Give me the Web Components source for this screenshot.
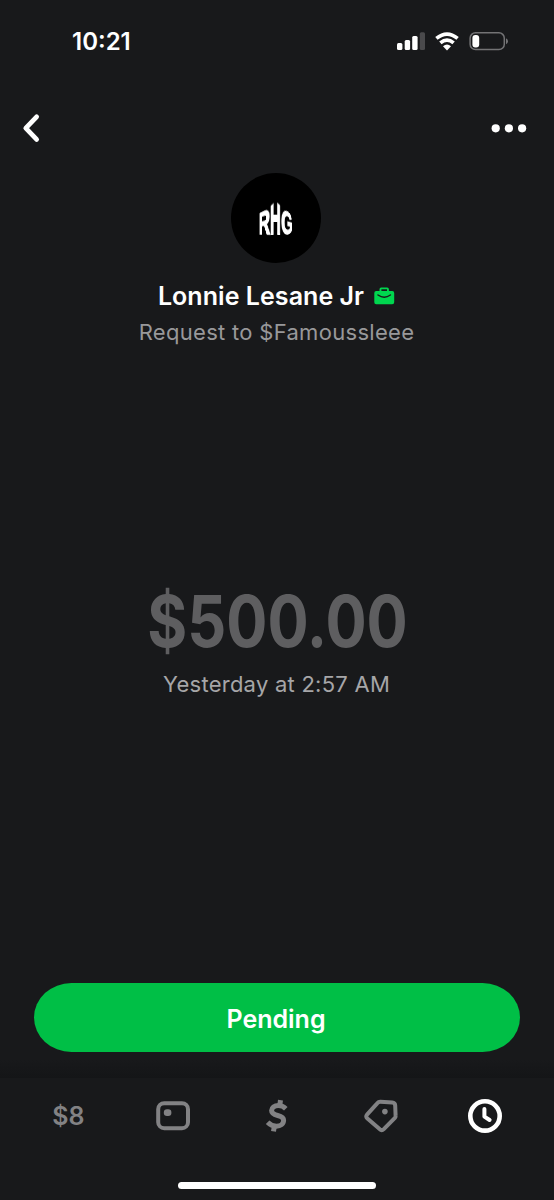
<!DOCTYPE html>
<html lang="en">
<head>
<meta charset="utf-8">
<meta name="viewport" content="width=device-width, initial-scale=1">
<title>Payment</title>
<style>
  html, body {
    margin: 0;
    height: 100%;
    background: #18191b;
  }
</style>
</head>
<body>
<payment-screen></payment-screen>

<script>
const define = (name, html) => {
  const template = document.createElement('template');
  template.innerHTML = html;
  customElements.define(name, class extends HTMLElement {
    constructor() {
      super();
      this.attachShadow({ mode: 'open' }).appendChild(template.content.cloneNode(true));
    }
  });
};

define('status-bar', `
  <style>
    :host {
      display: flex;
      justify-content: space-between;
      align-items: center;
      height: 82px;
      padding: 0 45px 0 72px;
      box-sizing: border-box;
      color: #fff;
      font: 600 24px/30px Inter, sans-serif;
    }
    .time { padding-top: 2px; }
    .icons { display: flex; align-items: center; }
    svg { display: block; }
  </style>
  <span class="time"><slot></slot></span>
  <div class="icons">
    <svg width="112" height="24" viewBox="397 29 112 24" fill="#fff">
      <rect x="397" y="43" width="5.4" height="7" rx="1.5"/>
      <rect x="404.7" y="40" width="5.4" height="10" rx="1.5"/>
      <rect x="412.2" y="36" width="5.4" height="14" rx="1.5"/>
      <rect x="419.8" y="32.2" width="5.2" height="17.8" rx="1.5" fill="#4a4a4c"/>
      <g fill="none" stroke="#fff" stroke-width="3.7">
        <path d="M436.4 38.4Q447 29.8 457.6 38.4"/>
        <path d="M440.4 42.9Q447 37.4 453.6 42.9"/>
      </g>
      <path d="M447 50.4L443 46.3Q447 42.8 451 46.3Z"/>
      <rect x="470.1" y="32.8" width="34.2" height="16.8" rx="5.4" fill="none" stroke="#737375" stroke-width="1.5"/>
      <rect x="472.4" y="35" width="6.8" height="12.4" rx="3"/>
      <path d="M506 38.2Q508 39 508 41.2Q508 43.4 506 44.2Z" fill="#737375"/>
    </svg>
  </div>
`);

define('nav-header', `
  <style>
    :host {
      display: flex;
      justify-content: space-between;
      align-items: center;
      height: 91px;
      padding: 0 27px 0 21px;
      box-sizing: border-box;
    }
    svg { display: block; }
  </style>
  <svg width="22" height="32" viewBox="0 0 22 32" fill="none" stroke="#fff" stroke-width="4.8" stroke-linecap="round" stroke-linejoin="round">
    <path d="M15.6 4.8L4.8 16.1L15.6 27.4"/>
  </svg>
  <svg width="36" height="12" viewBox="0 0 36 12" fill="#fff">
    <circle cx="4.7" cy="6.3" r="4.1"/>
    <circle cx="17.9" cy="6.3" r="4.1"/>
    <circle cx="31.1" cy="6.3" r="4.1"/>
  </svg>
`);

define('user-avatar', `
  <style>
    :host {
      display: flex;
      justify-content: center;
      width: 90px;
      height: 90px;
      padding-top: 32px;
      box-sizing: border-box;
      border-radius: 50%;
      background: #000;
      color: #fff;
    }
    /* the monogram is a house: outer letters slope up to a peak in the H */
    .mark {
      display: flex;
      width: 34px;
      font: 700 34px/34px "Liberation Sans", sans-serif;
      -webkit-text-stroke: 1.4px #fff;
    }
    span {
      flex: none;
      width: 26px;
      margin-right: -15px;
      transform-origin: 0 29px;
    }
    .r { transform: matrix3d(.417, 0, 0, -.01, 0, 1, 0, 0, 0, 0, 1, 0, 0, 0, 0, 1.15); }
    .h {
      transform: scale(.44, 1.31);
      clip-path: polygon(0 8px, 50% 4px, 100% 8px, 100% 100%, 0 100%);
    }
    .g { transform: matrix3d(.5, 0, 0, .01, 0, 1, 0, 0, 0, 0, 1, 0, 0, 0, 0, .91); }
  </style>
  <div class="mark"><span class="r">R</span><span class="h">H</span><span class="g">G</span></div>
`);

define('profile-card', `
  <style>
    :host {
      display: flex;
      flex-direction: column;
      align-items: center;
      padding-right: 1px;
      font-family: Inter, sans-serif;
    }
    user-avatar { margin-right: 1px; }
    .name {
      display: flex;
      align-items: center;
      gap: 10px;
      margin-top: 15px;
      color: #fff;
      font-size: 25px;
      font-weight: 600;
      line-height: 36px;
      letter-spacing: .05px;
    }
    .note {
      margin-top: 1px;
      color: #98989a;
      font-size: 22px;
      line-height: 34px;
      letter-spacing: .3px;
    }
    svg { display: block; }
  </style>
  <user-avatar></user-avatar>
  <div class="name">
    <slot name="name"></slot>
    <svg width="21" height="20" viewBox="0 0 21 20">
      <path fill="#00d64f" fill-rule="evenodd" d="M5.5 5V3.2Q5.5 1.5 7.2 1.5H13.2Q14.9 1.5 14.9 3.2V5H18.3Q20.2 5 20.2 6.9V16.2Q20.2 18.2 18.2 18.2H2.2Q.3 18.2 .3 16.2V6.9Q.3 5 2.2 5ZM7.4 5H13V3.3H7.4Z"/>
      <path d="M4 9Q10.2 13.4 16.4 9" fill="none" stroke="#18191b" stroke-width="1.5" stroke-linecap="round"/>
    </svg>
  </div>
  <div class="note"><slot name="note"></slot></div>
`);

define('payment-amount', `
  <style>
    :host {
      display: flex;
      flex-direction: column;
      align-items: center;
      font-family: Inter, sans-serif;
    }
    .amount {
      color: #5e5e60;
      font-size: 71px;
      font-weight: 700;
      line-height: 90px;
      transform: scaleX(.86);
    }
    .date {
      margin: 1px 1px 0 0;
      color: #a6a6a8;
      font-size: 22px;
      line-height: 34px;
      letter-spacing: .25px;
    }
  </style>
  <div class="amount"><slot></slot></div>
  <div class="date"><slot name="date"></slot></div>
`);

define('pill-button', `
  <style>
    :host {
      display: flex;
      justify-content: center;
      align-items: center;
      height: 69px;
      margin: 0 34px;
      padding: 2px 2px 0 0;
      box-sizing: border-box;
      border-radius: 38px / 35px;
      background: #00bf46;
      color: #fff;
      font: 600 25px/36px Inter, sans-serif;
    }
  </style>
  <slot></slot>
`);

define('tab-bar', `
  <style>
    :host {
      display: block;
      height: 122px;
      color: #828284;
      font: 600 25px/40px Inter, sans-serif;
    }
    .tabs {
      display: grid;
      grid-template-columns: repeat(5, 104px);
      justify-content: center;
      justify-items: center;
      align-items: center;
      height: 75px;
      padding-right: 1px;
    }
    svg { display: block; }
    .home {
      width: 198px;
      height: 7px;
      margin: 29px auto 0;
      border-radius: 4px;
      background: #fff;
    }
  </style>
  <div class="tabs">
    <span><slot></slot></span>
    <svg width="36" height="32" viewBox="0 0 36 32">
      <rect x="3.2" y="3.2" width="29.8" height="25" rx="6" fill="none" stroke="currentColor" stroke-width="4"/>
      <rect x="8.8" y="9.2" width="7.6" height="6.8" rx="3.2" fill="currentColor"/>
    </svg>
    <svg width="24" height="34" viewBox="0 0 24 34" fill="none" stroke="currentColor" stroke-width="5">
      <path d="M20.8 9.8Q17.6 6.6 13.4 6.6C9.3 6.6 6.6 8.8 6.6 11.6C6.6 18.3 18.6 14.8 18.6 21.2C18.6 24.9 15.4 27.2 11.4 27.2Q6.4 27.2 2.6 23.3"/>
      <path d="M14.7 6.8L15.5 1.2M8.5 32.4L9.4 26.8"/>
    </svg>
    <svg width="36" height="36" viewBox="0 0 36 36">
      <path d="M17.4 3.7L29.3 4.5Q32 4.7 32.2 7.5L32.6 17.7Q32.7 18.9 31.9 19.8L20.8 31.1Q18.7 33.1 16.6 31.1L4.4 20.6Q2.4 18.7 4 16.6L14.2 5.3Q15.6 3.6 17.4 3.7Z" fill="none" stroke="currentColor" stroke-width="4" stroke-linejoin="round"/>
      <circle cx="21.9" cy="13.6" r="2.8" fill="currentColor"/>
    </svg>
    <svg width="36" height="36" viewBox="0 0 36 36" fill="none" stroke="#fff" stroke-linecap="round" stroke-linejoin="round">
      <circle cx="18" cy="17.9" r="14.7" stroke-width="4.6"/>
      <path d="M17.4 11.1V18.6L22.6 22" stroke-width="4"/>
    </svg>
  </div>
  <div class="home"></div>
`);

define('payment-screen', `
  <style>
    :host {
      display: flex;
      flex-direction: column;
      height: 1200px;
      background: #18191b;
    }
    payment-amount { margin-top: 227px; }
    pill-button { margin-top: auto; }
    .shade {
      height: 26px;
      background: linear-gradient(#18191b 30%, #141517);
    }
  </style>
  <status-bar>10:21</status-bar>
  <nav-header></nav-header>
  <profile-card>
    <span slot="name">Lonnie Lesane Jr</span>
    <span slot="note">Request to $Famoussleee</span>
  </profile-card>
  <payment-amount>
    $500.00
    <span slot="date">Yesterday at 2:57 AM</span>
  </payment-amount>
  <pill-button>Pending</pill-button>
  <div class="shade"></div>
  <tab-bar>$8</tab-bar>
`);
</script>
</body>
</html>
